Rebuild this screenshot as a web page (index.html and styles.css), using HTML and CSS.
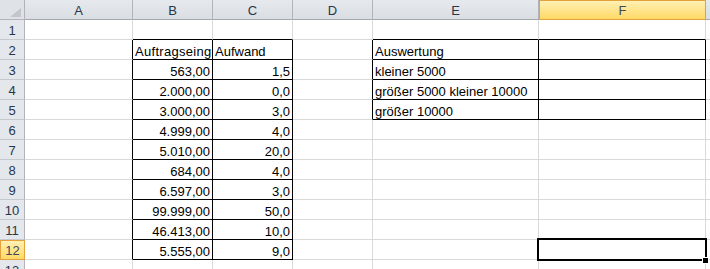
FILE: index.html
```html
<!DOCTYPE html>
<html lang="de">
<head>
    <meta charset="UTF-8">
    <title>Auswertung Auftragseingang</title>
    <link rel="stylesheet" href="styles.css">
</head>
<body>
    <div class="sheet">
        <!-- Spaltenköpfe -->
        <div class="corner"><span class="tri"></span></div>
        <div class="colh">A</div>
        <div class="colh">B</div>
        <div class="colh">C</div>
        <div class="colh">D</div>
        <div class="colh">E</div>
        <div class="colh active">F</div>
        <div class="colh last"></div>

        <!-- Zeile 1 -->
        <div class="rowh">1</div>
        <div class="cell"></div>
        <div class="cell d"></div>
        <div class="cell d"></div>
        <div class="cell"></div>
        <div class="cell d"></div>
        <div class="cell d"></div>
        <div class="cell"></div>

        <!-- Zeile 2 -->
        <div class="rowh">2</div>
        <div class="cell r"></div>
        <div class="cell r d clip">Auftragseing</div>
        <div class="cell r d">Aufwand</div>
        <div class="cell r"></div>
        <div class="cell r d">Auswertung</div>
        <div class="cell r d"></div>
        <div class="cell"></div>

        <!-- Zeile 3 -->
        <div class="rowh">3</div>
        <div class="cell r"></div>
        <div class="cell r d num">563,00</div>
        <div class="cell r d num">1,5</div>
        <div class="cell r"></div>
        <div class="cell r d">kleiner 5000</div>
        <div class="cell r d"></div>
        <div class="cell"></div>

        <!-- Zeile 4 -->
        <div class="rowh">4</div>
        <div class="cell r"></div>
        <div class="cell r d num">2.000,00</div>
        <div class="cell r d num">0,0</div>
        <div class="cell r"></div>
        <div class="cell r d">größer 5000 kleiner 10000</div>
        <div class="cell r d"></div>
        <div class="cell"></div>

        <!-- Zeile 5 -->
        <div class="rowh">5</div>
        <div class="cell r"></div>
        <div class="cell r d num">3.000,00</div>
        <div class="cell r d num">3,0</div>
        <div class="cell r"></div>
        <div class="cell r d">größer 10000</div>
        <div class="cell r d"></div>
        <div class="cell"></div>

        <!-- Zeile 6 -->
        <div class="rowh">6</div>
        <div class="cell r"></div>
        <div class="cell r d num">4.999,00</div>
        <div class="cell r d num">4,0</div>
        <div class="cell"></div>
        <div class="cell"></div>
        <div class="cell"></div>
        <div class="cell"></div>

        <!-- Zeile 7 -->
        <div class="rowh">7</div>
        <div class="cell r"></div>
        <div class="cell r d num">5.010,00</div>
        <div class="cell r d num">20,0</div>
        <div class="cell"></div>
        <div class="cell"></div>
        <div class="cell"></div>
        <div class="cell"></div>

        <!-- Zeile 8 -->
        <div class="rowh">8</div>
        <div class="cell r"></div>
        <div class="cell r d num">684,00</div>
        <div class="cell r d num">4,0</div>
        <div class="cell"></div>
        <div class="cell"></div>
        <div class="cell"></div>
        <div class="cell"></div>

        <!-- Zeile 9 -->
        <div class="rowh">9</div>
        <div class="cell r"></div>
        <div class="cell r d num">6.597,00</div>
        <div class="cell r d num">3,0</div>
        <div class="cell"></div>
        <div class="cell"></div>
        <div class="cell"></div>
        <div class="cell"></div>

        <!-- Zeile 10 -->
        <div class="rowh">10</div>
        <div class="cell r"></div>
        <div class="cell r d num">99.999,00</div>
        <div class="cell r d num">50,0</div>
        <div class="cell"></div>
        <div class="cell"></div>
        <div class="cell"></div>
        <div class="cell"></div>

        <!-- Zeile 11 -->
        <div class="rowh">11</div>
        <div class="cell r"></div>
        <div class="cell r d num">46.413,00</div>
        <div class="cell r d num">10,0</div>
        <div class="cell"></div>
        <div class="cell"></div>
        <div class="cell"></div>
        <div class="cell"></div>

        <!-- Zeile 12 -->
        <div class="rowh active">12</div>
        <div class="cell r"></div>
        <div class="cell r d num">5.555,00</div>
        <div class="cell r d num">9,0</div>
        <div class="cell"></div>
        <div class="cell"></div>
        <div class="cell selected"></div>
        <div class="cell"></div>

        <!-- Zeile 13 -->
        <div class="rowh">13</div>
        <div class="cell"></div>
        <div class="cell"></div>
        <div class="cell"></div>
        <div class="cell"></div>
        <div class="cell"></div>
        <div class="cell"></div>
        <div class="cell"></div>
    </div>
</body>
</html>
```

FILE: styles.css
```css
:root {
    --grid: #d9d9d9;
    --head-bg: #dfe2e7;
    --head-line: #b1b5bb;
    --head-text: #27364a;
    --active-line: #e2a23e;
}

html, body {
    margin: 0;
    height: 100%;
    overflow: hidden;
    background: #fff;
}

body {
    font-family: 'Liberation Sans', Arial, sans-serif;
    font-size: 13px;
    color: #000;
}

.sheet {
    display: grid;
    grid-template-columns: 25px 108px 80px 80px 80px 166px 167px 1fr;
    grid-auto-rows: 20px;
    width: 100%;
}

.sheet > div {
    box-sizing: border-box;
    overflow: hidden;
    white-space: nowrap;
}

/* Kopfzeile und Kopfspalte */
.corner, .colh, .rowh {
    background: var(--head-bg);
    color: var(--head-text);
    display: flex;
    align-items: center;
    justify-content: center;
    line-height: 15px;
}

.corner {
    position: relative;
    border-right: 1px solid var(--head-line);
    border-bottom: 1px solid var(--head-line);
}

.corner .tri {
    position: absolute;
    left: 10px;
    top: 8px;
    width: 11px;
    height: 9px;
    background: #c3c7cc;
    clip-path: polygon(100% 0, 100% 100%, 0 100%);
}

.colh {
    background: linear-gradient(#e6e9ed, #dadee3);
    border-right: 1px solid var(--head-line);
    border-bottom: 1px solid #a3a8ae;
    padding-top: 1px;
}

.colh.last {
    border-right: none;
}

.rowh {
    background: #e4e7eb;
    border-right: 1px solid var(--head-line);
    border-bottom: 1px solid #c5c9ce;
    padding-top: 1px;
}

.colh.active, .rowh.active {
    background: linear-gradient(#fff0b3, #ffd966);
    border: 1px solid var(--active-line);
    color: #3e4a5a;
}

/* Zellen */
.cell {
    border-right: 1px solid var(--grid);
    border-bottom: 1px solid var(--grid);
    padding: 0 2px;
    line-height: 15px;
    display: flex;
    align-items: flex-end;
}

.cell.r {
    border-right-color: #000;
}

.cell.d {
    border-bottom-color: #000;
}

.cell.num {
    justify-content: flex-end;
}

.cell.clip {
    padding-right: 0;
    letter-spacing: 0.3px;
}

/* aktive Zelle F12 */
.sheet > .selected {
    position: relative;
    overflow: visible;
}

.selected::after {
    content: "";
    position: absolute;
    left: -2px;
    top: -2px;
    right: -2px;
    bottom: -2px;
    border: 2px solid #000;
}

.selected::before {
    content: "";
    position: absolute;
    right: -4px;
    bottom: -5px;
    width: 5px;
    height: 5px;
    background: #000;
    border: 1px solid #fff;
    z-index: 2;
}
```
